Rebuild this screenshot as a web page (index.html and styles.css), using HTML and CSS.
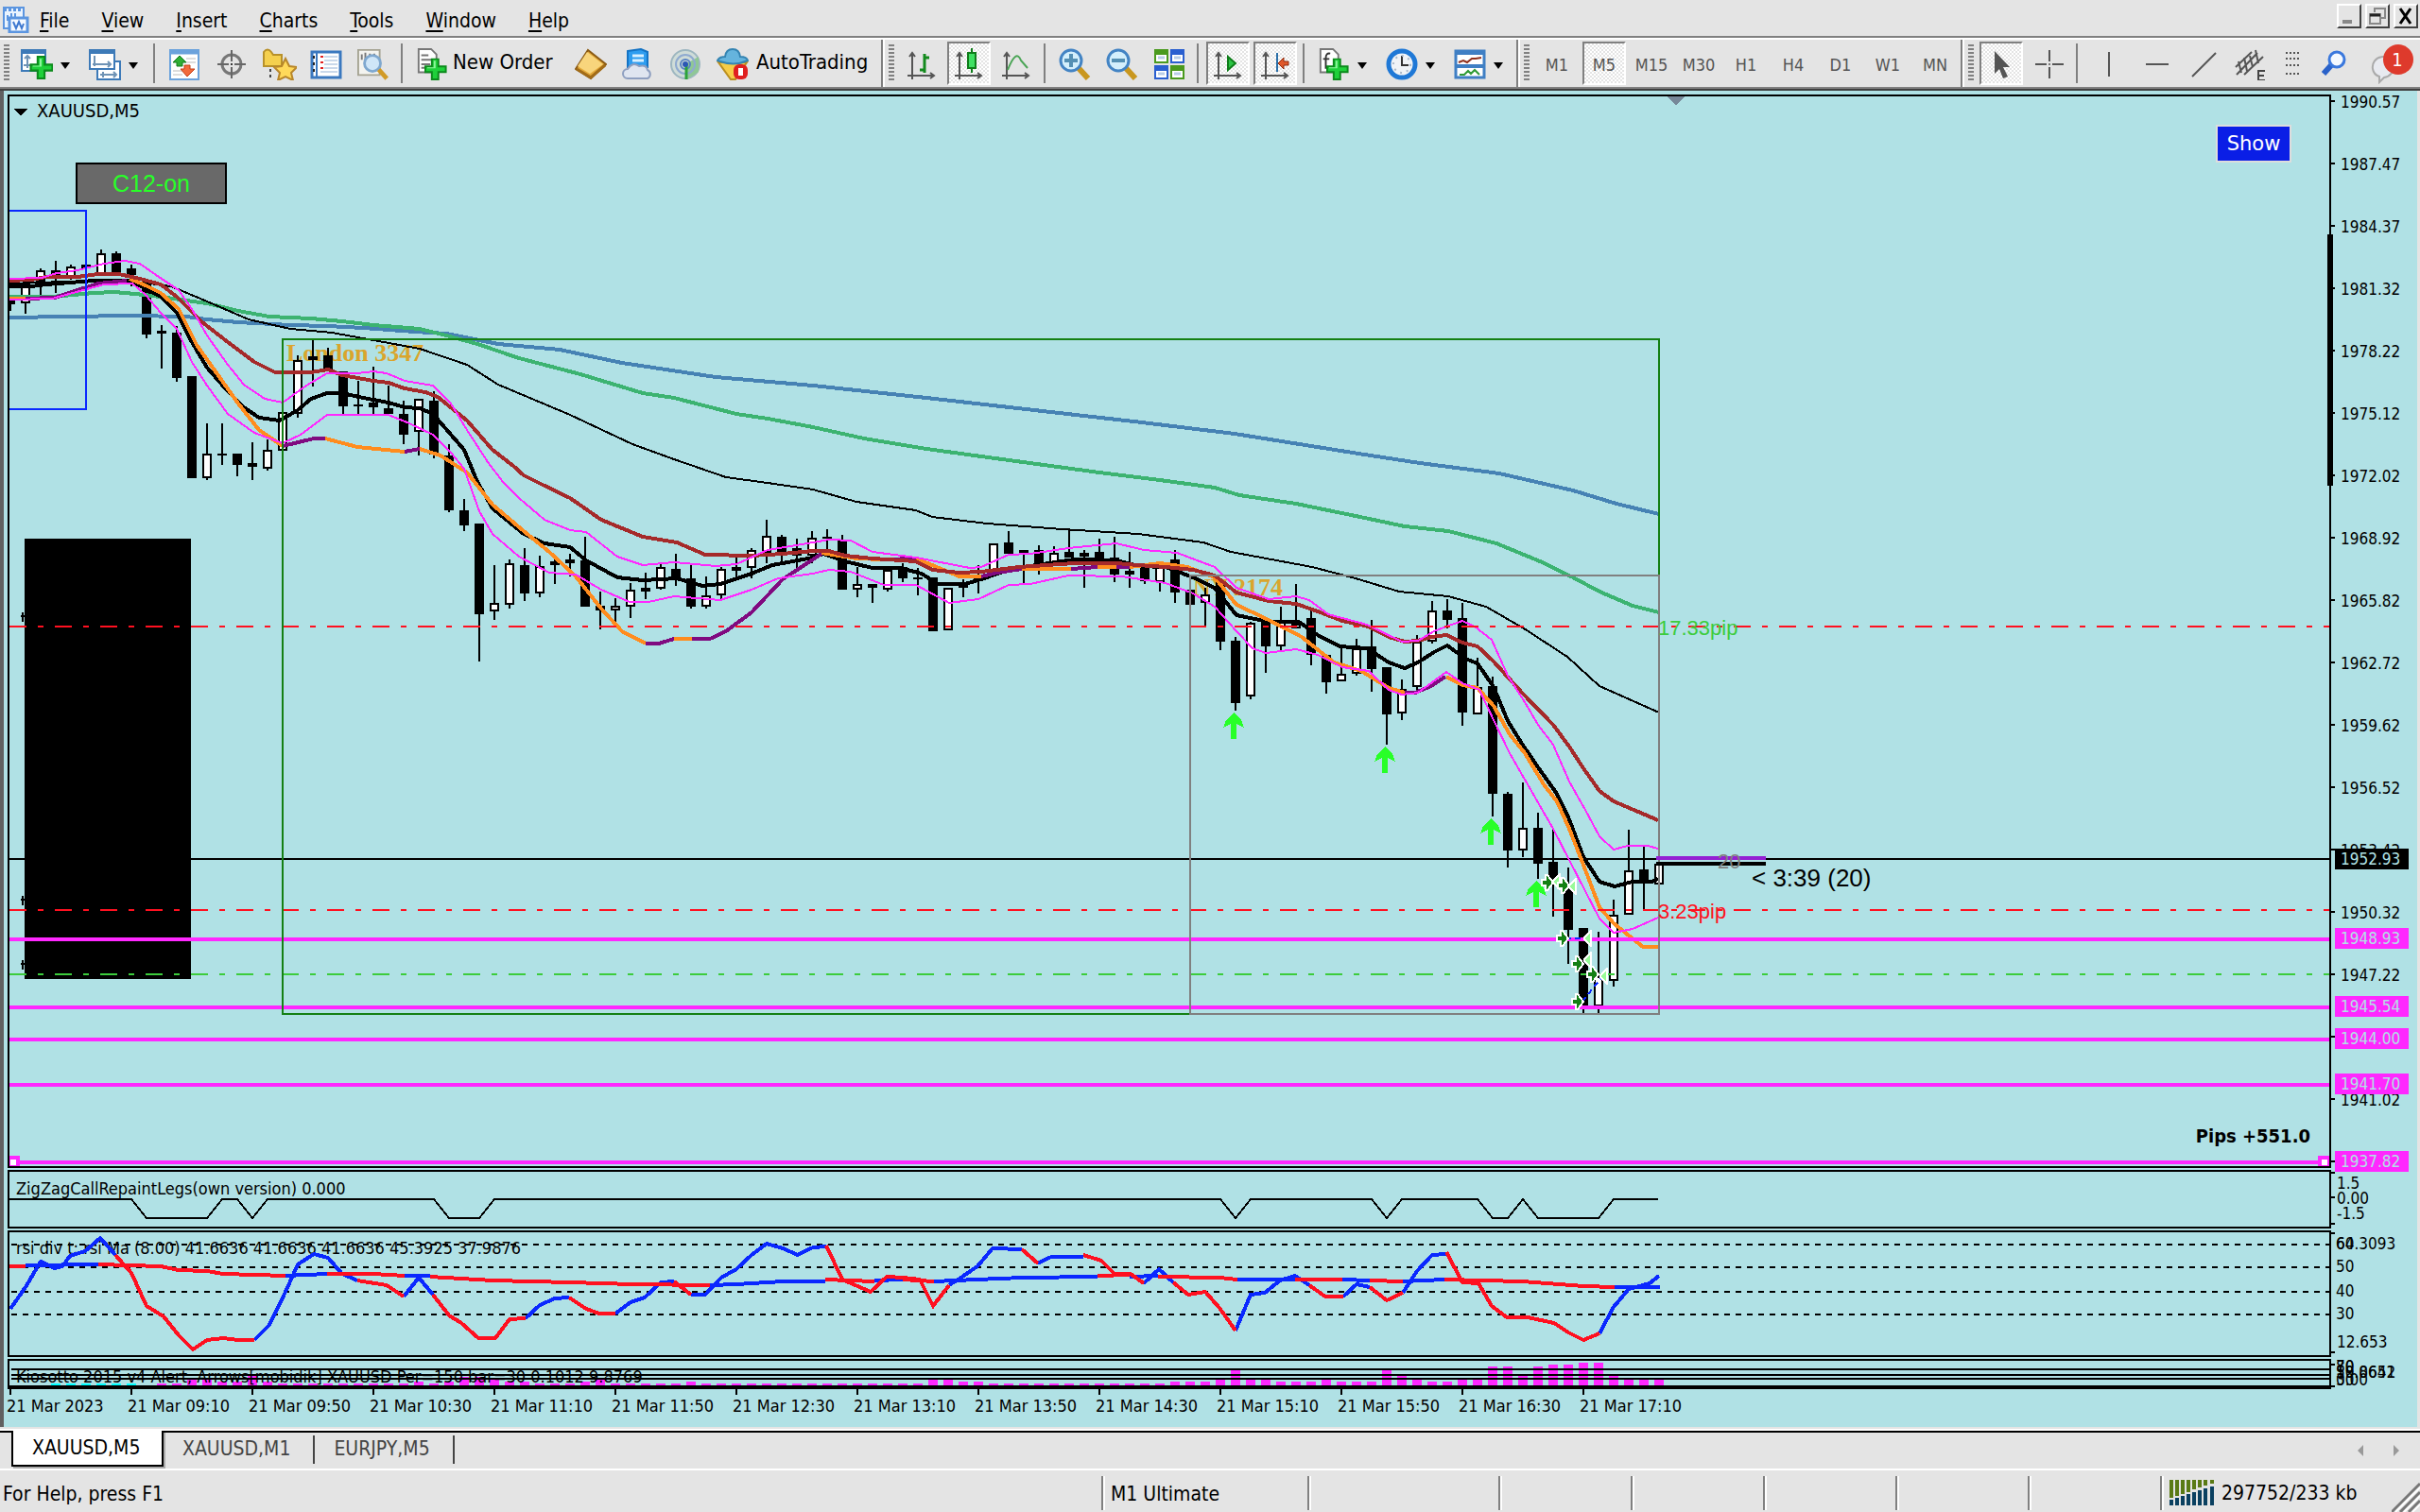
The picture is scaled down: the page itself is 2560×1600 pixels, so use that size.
FILE: index.html
```html
<!DOCTYPE html>
<html lang="en">
<head>
<meta charset="utf-8">
<title>XAUUSD,M5</title>
<link rel="stylesheet" href="styles.css">
</head>
<body>
<svg class="defs" width="0" height="0" aria-hidden="true">
  <defs>
    <symbol id="plus" viewBox="0 0 24 24"><path d="M8 1h7v8h8v6h-8v8H8v-8H1V9h7z" fill="#1fd03a" stroke="#0c8a1c" stroke-width="2"/><path d="M10 3h2v8H3v-1h7z" fill="#8cf59a"/></symbol>
    <symbol id="axes" viewBox="0 0 34 34"><path d="M7 5v28M2 29h28M4 9l3-4 3 4M26 26l4 3-4 3" fill="none" stroke="#555" stroke-width="2"/></symbol>
    <symbol id="trade-in" viewBox="0 0 14 18"><path d="M1 6h4V1h2l6 8-6 8H5v-5H1z" fill="#148014" stroke="#fff" stroke-width="2"/></symbol>
    <symbol id="trade-out" viewBox="0 0 10 18"><path d="M9 1v16L2 10V8z" fill="#98fb98" stroke="#fff" stroke-width="2"/></symbol>
    <symbol id="buy" viewBox="0 0 22 28"><path d="M11 0l8 8 3 8-8-4v16H8V12l-8 4 3-8z" fill="#28ff28"/></symbol>
  </defs>
</svg>

<header class="menubar">
  <svg class="app-icon" width="30" height="30" viewBox="0 0 30 30"><path d="M2 3h21v22H2z" fill="#eaf4ff" stroke="#5b95e0" stroke-width="2"/><path d="M2 5h21" stroke="#5b95e0" stroke-width="4" stroke-dasharray="3 2"/><path d="M6 17v-6m4 4V9m4 4V9" stroke="#5b95e0" stroke-width="2"/><path d="M8 14h19v15H8z" fill="#f4f9ff" stroke="#5b95e0" stroke-width="3"/><path d="M12 18l3 7 3-7 3 7 2-5" fill="none" stroke="#3d78d0" stroke-width="2"/></svg>
  <nav class="menu">
    <button><u>F</u>ile</button><button><u>V</u>iew</button><button><u>I</u>nsert</button><button><u>C</u>harts</button><button><u>T</u>ools</button><button><u>W</u>indow</button><button><u>H</u>elp</button>
  </nav>
  <div class="winbuttons">
    <button aria-label="Minimize"><svg width="22" height="20"><path d="M4 16h10" stroke="#888" stroke-width="4"/></svg></button>
    <button aria-label="Restore"><svg width="22" height="20"><path d="M8 6V2h11v10h-4M3 8h11v10H3z" fill="none" stroke="#888" stroke-width="2"/><path d="M3 9h11" stroke="#222" stroke-width="3"/></svg></button>
    <button aria-label="Close"><svg width="22" height="20"><path d="M5 2l11 16M16 2L5 18" stroke="#000" stroke-width="3"/></svg></button>
  </div>
</header>

<div class="toolbar">
  <i class="grip"></i>
  <button class="tb dd" aria-label="New chart"><svg class="ico" viewBox="0 0 34 34"><path d="M1 2h25v22H1z" fill="#fff" stroke="#3d7ab8" stroke-width="2"/><path d="M1 4h25" stroke="#3d7ab8" stroke-width="4"/><path d="M7 8v13M4 11l3-3 3 3M3 18h13" fill="none" stroke="#6f93b5" stroke-width="2"/><use href="#plus" x="9" y="8" width="26" height="25"/></svg></button>
  <button class="tb dd" aria-label="Profiles"><svg class="ico" viewBox="0 0 34 34"><path d="M9 14h24v19H9z" fill="#fff" stroke="#3d7ab8" stroke-width="2"/><path d="M1 2h26v20H1z" fill="#fff" stroke="#3d7ab8" stroke-width="2"/><path d="M1 4h26" stroke="#3d7ab8" stroke-width="4"/><path d="M6 8v11M4 17h19M20 14l3 3-3 3M12 28h17M15 25v6M26 25l3 3-3 3" fill="none" stroke="#6f93b5" stroke-width="2"/></svg></button>
  <i class="sep"></i>
  <button class="tb" aria-label="Market watch"><svg class="ico" viewBox="0 0 34 34"><path d="M2 2h30v31H2z" fill="#fff" stroke="#6ba2dc" stroke-width="2"/><path d="M2 4h30" stroke="#6ba2dc" stroke-width="5"/><path d="M19 11h10M19 15h10M5 24h10M5 28h10" stroke="#ddd" stroke-width="2"/><path d="M12 8l7 7h-4v4h-6v-4H5z" fill="#2fae35" stroke="#137a1c"/><path d="M17 18h6v4h5l-8 8-7-8h4z" fill="#f26a3c" stroke="#c33c14"/></svg></button>
  <button class="tb" aria-label="Data window"><svg class="ico" viewBox="0 0 34 34"><circle cx="17" cy="17" r="10" fill="none" stroke="#777" stroke-width="3"/><path d="M17 2v12M17 20v12M2 17h12M20 17h12" stroke="#666" stroke-width="2"/><circle cx="17" cy="17" r="1"/></svg></button>
  <button class="tb" aria-label="Navigator"><svg class="ico wide" viewBox="0 0 38 34"><path d="M3 4q4-5 8 0l2 3h9v12H3z" fill="#f5d04e" stroke="#b8912a" stroke-width="2"/><path d="M10 22v12" stroke="#444" stroke-width="2" stroke-dasharray="3 3"/><path d="M26 11l4 8 8 1-6 6 2 8-8-4-8 4 2-8-6-6 8-1z" fill="#ffd95a" stroke="#b8862a" stroke-width="2"/></svg></button>
  <button class="tb" aria-label="Terminal"><svg class="ico" viewBox="0 0 34 34"><path d="M2 4h30v27H2z" fill="#fff" stroke="#3a78bf" stroke-width="3"/><path d="M7 4v27" stroke="#3a78bf" stroke-width="2"/><path d="M11 9h3M11 15h3M11 21h3" stroke="#e02020" stroke-width="2"/><path d="M15 9h14M15 13h14M15 17h14M15 21h14M11 25h18" stroke="#c9d8ea" stroke-width="2"/><path d="M4 8v3m0 4v3m0 4v3" stroke="#222" stroke-width="2"/></svg></button>
  <button class="tb" aria-label="Strategy tester"><svg class="ico" viewBox="0 0 36 36"><path d="M1 2h24v28H1z" fill="#f4f4f0" stroke="#a5a392" stroke-width="2"/><path d="M5 7v6M9 5v8M14 6v6M19 6v6" stroke="#777" stroke-width="2"/><circle cx="17" cy="17" r="9" fill="#cfe6f8" stroke="#7fa8cf" stroke-width="3"/><path d="M24 24l9 10" stroke="#d19a26" stroke-width="5"/></svg></button>
  <i class="sep"></i>
  <button class="tb text order"><svg class="ico" viewBox="0 0 34 36"><path d="M2 1h14l6 6v20H2z" fill="#fff" stroke="#777" stroke-width="2"/><path d="M5 8h8M5 13h12M5 18h10M5 22h8" stroke="#777" stroke-width="2"/><use href="#plus" x="8" y="11" width="26" height="25"/></svg><span>New Order</span></button>
  <button class="tb" aria-label="MetaEditor"><svg class="ico" viewBox="0 0 34 34"><path d="M14 2L33 17 17 32 1 22z" fill="#e3a93a" stroke="#8a5a14" stroke-width="2"/><path d="M13 4L3 19l13 8L30 17z" fill="#f8d57c"/><path d="M2 22l15 9 15-13" fill="none" stroke="#a26c18" stroke-width="3"/></svg></button>
  <button class="tb" aria-label="VPS"><svg class="ico" viewBox="0 0 34 34"><path d="M6 3l14-2 7 3v16H6z" fill="#2e9df0" stroke="#1473c4" stroke-width="2"/><path d="M11 8h12M11 13h12" stroke="#d8f0ff" stroke-width="3"/><path d="M6 32a5 5 0 0 1 0-10q5-8 12-3 8-2 9 4a5 5 0 0 1 0 9z" fill="#dfe5f0" stroke="#8e9fc0" stroke-width="2"/></svg></button>
  <button class="tb" aria-label="Signals"><svg class="ico" viewBox="0 0 34 34"><circle cx="17" cy="17" r="15" fill="#cfdcd8" stroke="#9db6c0" stroke-width="2"/><path d="M17 17L31 9v16L19 33z" fill="#8fc796"/><circle cx="17" cy="17" r="10" fill="none" stroke="#8faad0" stroke-width="2"/><circle cx="17" cy="17" r="5" fill="none" stroke="#5a83c4" stroke-width="2"/><path d="M18 17v16" stroke="#2ba33a" stroke-width="3"/><circle cx="17" cy="17" r="3" fill="#2b57b5"/></svg></button>
  <button class="tb text auto"><svg class="ico" viewBox="0 0 34 34"><path d="M2 15h30L20 33h-5z" fill="#f6cd48" stroke="#bb8f1e" stroke-width="2"/><path d="M1 13q2-4 8-4 1-8 8-8t8 8q7 0 8 4-15 7-32 0z" fill="#65b4dd" stroke="#3484b2" stroke-width="2"/><rect x="18" y="17" width="15" height="16" rx="6" fill="#e02020"/><path d="M23 21h5v8h-5z" fill="#fff"/></svg><span>AutoTrading</span></button>
  <i class="split"></i><i class="grip"></i>
  <button class="tb" aria-label="Bar chart"><svg class="ico" viewBox="0 0 34 34"><use href="#axes"/><path d="M20 6v20M20 10h5M15 23h5" stroke="#138a1d" stroke-width="3"/></svg></button>
  <button class="tb on" aria-label="Candlesticks"><svg class="ico" viewBox="0 0 34 34"><use href="#axes"/><path d="M20 0v26" stroke="#0f7d1a" stroke-width="2"/><path d="M16 5h8v16h-8z" fill="#3fe062" stroke="#0f7d1a" stroke-width="2"/></svg></button>
  <button class="tb" aria-label="Line chart"><svg class="ico" viewBox="0 0 34 34"><use href="#axes"/><path d="M8 23Q17 0 22 13l7 8" fill="none" stroke="#4ba556" stroke-width="2"/></svg></button>
  <i class="sep"></i>
  <button class="tb" aria-label="Zoom in"><svg class="ico" viewBox="0 0 34 34"><path d="M20 20l11 12" stroke="#c9971f" stroke-width="6"/><circle cx="13" cy="13" r="11" fill="#d3effc" stroke="#4384c4" stroke-width="3"/><path d="M13 6v14M6 13h14" stroke="#5490b4" stroke-width="4"/></svg></button>
  <button class="tb" aria-label="Zoom out"><svg class="ico" viewBox="0 0 34 34"><path d="M20 20l11 12" stroke="#c9971f" stroke-width="6"/><circle cx="13" cy="13" r="11" fill="#d3effc" stroke="#4384c4" stroke-width="3"/><path d="M6 13h14" stroke="#5490b4" stroke-width="4"/></svg></button>
  <button class="tb" aria-label="Tile windows"><svg class="ico" viewBox="0 0 34 34"><path d="M1 1h15v15H1zM18 18h15v15H18z" fill="#4a9a1e"/><path d="M18 1h15v15H18zM1 18h15v15H1z" fill="#2a5fd0"/><path d="M3 7h11v7H3zM20 7h11v7H20zM3 24h11v7H3zM20 24h11v7H20z" fill="#fff"/><path d="M5 10h7M22 10h7M5 27h7M22 27h7" stroke="#b9cde8" stroke-width="3"/></svg></button>
  <i class="sep"></i>
  <button class="tb on" aria-label="Auto scroll"><svg class="ico" viewBox="0 0 34 34"><use href="#axes"/><path d="M17 9l8 7-8 7z" fill="#2bc443" stroke="#0f7d1a" stroke-width="2"/></svg></button>
  <button class="tb on" aria-label="Chart shift"><svg class="ico" viewBox="0 0 34 34"><use href="#axes"/><path d="M19 5v20" stroke="#2b6fa8" stroke-width="2"/><path d="M20 16l6-6v4h5v4h-5v4z" fill="#e0582a" stroke="#8f2a0c"/></svg></button>
  <i class="sep"></i>
  <button class="tb dd" aria-label="Indicators"><svg class="ico" viewBox="0 0 34 36"><path d="M2 1h14l6 6v20H2z" fill="#fff" stroke="#777" stroke-width="2"/><path d="M13 6q-5-1-5 5v12M5 12h7" fill="none" stroke="#333" stroke-width="2"/><use href="#plus" x="8" y="11" width="26" height="25"/></svg></button>
  <button class="tb dd" aria-label="Periods"><svg class="ico" viewBox="0 0 34 34"><circle cx="17" cy="17" r="14" fill="#f0f3f7" stroke="#1f78d6" stroke-width="5"/><path d="M17 8v10h7" fill="none" stroke="#333" stroke-width="2"/><circle cx="17" cy="17" r="9" fill="none" stroke="#aab8c8" stroke-width="2" stroke-dasharray="2 5"/></svg></button>
  <button class="tb dd" aria-label="Templates"><svg class="ico" viewBox="0 0 34 34"><path d="M2 3h30v28H2z" fill="#fff" stroke="#3f7fc4" stroke-width="3"/><path d="M2 5h30M2 19h30" stroke="#3f7fc4" stroke-width="4"/><path d="M5 15l5-2 4 2 5-4h4l6-1" fill="none" stroke="#8f2f1c" stroke-width="2"/><path d="M6 28h5l4-4 3 3 4-4 5 5" fill="none" stroke="#2f9a35" stroke-width="2"/></svg></button>
  <i class="split"></i><i class="grip"></i>
  <button class="tb tf">M1</button><button class="tb tf on">M5</button><button class="tb tf">M15</button><button class="tb tf">M30</button><button class="tb tf">H1</button><button class="tb tf">H4</button><button class="tb tf">D1</button><button class="tb tf">W1</button><button class="tb tf">MN</button>
  <i class="split"></i><i class="grip"></i>
  <button class="tb on" aria-label="Cursor"><svg class="ico" viewBox="0 0 34 34"><path d="M10 3l16 17h-7l5 10-5 2-4-10-5 5z" fill="#555"/></svg></button>
  <button class="tb" aria-label="Crosshair"><svg class="ico" viewBox="0 0 34 34"><path d="M18 2v12M18 20v12M3 17h12M21 17h12" stroke="#555" stroke-width="2"/><circle cx="18" cy="17" r="1" fill="#555"/></svg></button>
  <i class="sep"></i>
  <button class="tb" aria-label="Vertical line"><svg class="ico" viewBox="0 0 34 34"><path d="M19 4v26" stroke="#555" stroke-width="2"/></svg></button>
  <button class="tb" aria-label="Horizontal line"><svg class="ico" viewBox="0 0 34 34"><path d="M8 17h24" stroke="#555" stroke-width="2"/></svg></button>
  <button class="tb" aria-label="Trend line"><svg class="ico" viewBox="0 0 34 34"><path d="M7 30L32 5" stroke="#555" stroke-width="2"/></svg></button>
  <button class="tb" aria-label="Equidistant channel"><svg class="ico" viewBox="0 0 34 34"><path d="M3 20L20 4M4 28L26 5M12 28L32 9M6 14l3 12M12 10l3 14M18 8l3 12M24 2l3 14" stroke="#555" stroke-width="2"/><path d="M34 24h-7v10h7M27 29h6" fill="none" stroke="#444" stroke-width="2"/></svg></button>
  <button class="tb" aria-label="Fibonacci"><svg class="ico" viewBox="0 0 34 34"><path d="M6 5h16M6 11h16M6 18h16M6 27h16" stroke="#555" stroke-width="2" stroke-dasharray="2 2"/></svg></button>
  <span class="right">
    <button class="tb search" aria-label="Search"><svg class="ico" viewBox="0 0 34 34"><path d="M11 17L2 27" stroke="#2a62c9" stroke-width="6"/><circle cx="16" cy="12" r="8" fill="#f4f9ff" stroke="#3a78dd" stroke-width="3"/></svg></button>
    <button class="tb chat" aria-label="Notifications"><svg width="48" height="44" viewBox="0 0 48 44"><path d="M4 28a11 11 0 1 1 12 9l-5 5v-6q-6-2-7-8z" fill="#e8eaf0" stroke="#aaa" stroke-width="2"/><circle cx="31" cy="18" r="16" fill="#de3a2c"/><text x="30" y="25" text-anchor="middle" class="badge">1</text></svg></button>
  </span>
</div>

<main class="chart">
  <section class="pane price">
    <div class="plot">
      <svg class="canvas">
        <g transform="translate(-10,-102)" class="crisp">
          <path d="M15 115h14l-7 8z"/>
          <text x="39" y="124" class="symbol">XAUUSD,M5</text>
          <path d="M1764 102h18l-9 10z" fill="#778899"/>
          <g class="session"><text x="303" y="382">London 3347</text><text x="1262" y="630">NY 2174</text></g>
          <path d="M10 909H6000" class="k2"/>
          <g id="candles"></g>
          <g fill="none" stroke-width="4" stroke-linejoin="round">
            <polyline stroke="#4682b4" points="10,336 72,335 137,334 197,335 219,338 252,341 307,344 346,345 384,347 439,351 472,353 527,364 592,370 658,384 757,399 860,408 980,421 1094,434 1208,447 1306,459 1437,480 1502,490 1586,501 1664,519 1710,533 1755,544"/>
            <polyline stroke="#3cb371" points="10,314 55,314 99,310 121,309 143,311 170,314 197,318 219,321 252,329 285,335 329,337 362,340 395,344 444,348 472,355 505,364 549,379 614,396 680,416 713,421 779,438 812,443 860,452 914,464 980,475 1060,486 1163,500 1227,508 1285,516 1311,524 1371,533 1434,546 1486,557 1532,562 1583,575 1629,594 1664,611 1692,626 1727,641 1755,648"/>
            <polyline class="k2" points="10,300 99,297 143,298 181,303 219,319 263,338 307,348 351,352 395,360 444,369 494,386 527,407 603,439 669,470 713,486 768,505 812,511 860,518 906,531 969,540 986,547 1044,554 1124,560 1204,565 1273,574 1302,584 1388,600 1434,612 1480,626 1532,631 1572,642 1612,665 1658,695 1692,726 1755,754"/>
            <polyline stroke="#000" points="10,303 33,303 49,301 99,297 137,297 154,305 170,314 187,331 203,362 219,389 241,414 258,431 274,442 296,445 315,434 329,422 346,416 362,416 384,421 411,426 428,431 444,432 458,438 491,476 505,510 521,538 554,565 576,575 603,579 620,593 653,611 680,614 716,612 743,620 762,618 795,607 817,598 860,590 871,586 894,594 923,601 952,601 975,607 992,618 1021,618 1041,612 1061,605 1090,599 1136,592 1181,593 1204,599 1233,600 1262,611 1285,622 1308,651 1342,658 1374,658 1394,672 1417,684 1446,686 1469,701 1486,707 1500,701 1517,690 1531,683 1550,697 1563,702 1580,727 1595,763 1610,787 1627,812 1647,840 1660,867 1675,907 1692,933 1708,938 1727,933 1747,933 1754,930"/>
            <g stroke="#ff8c1e">
              <polyline points="10,316 27,316"/>
              <polyline points="137,295 154,302 170,310 189,327 208,365 230,396 252,427 274,455 299,472"/>
              <polyline points="344,464 378,473 428,478"/>
              <polyline points="444,475 466,482 494,500 521,534 554,562 581,584 609,610 636,644 658,668 683,681"/>
              <polyline points="713,676 732,676"/>
              <polyline points="869,585 906,591 935,592"/>
              <polyline points="969,591 998,603 1015,610 1038,610"/>
              <polyline points="1081,602 1133,602"/>
              <polyline points="1161,600 1181,600"/>
              <polyline points="1195,600 1227,596 1256,600 1285,611 1308,640 1342,656 1377,674 1411,701 1440,710 1469,728 1486,733"/>
              <polyline points="1530,716 1547,725 1563,728 1580,747 1597,777 1613,797 1633,830 1647,848 1660,877 1673,910 1692,960 1707,977 1723,990 1738,1002 1755,1002"/>
            </g>
            <g stroke="#800a80">
              <polyline points="27,316 58,315 82,307 104,300 134,297"/>
              <polyline points="299,472 332,464 344,464"/>
              <polyline points="428,478 444,475"/>
              <polyline points="683,681 697,681 713,676"/>
              <polyline points="732,676 751,676 768,668 795,648 828,613 860,592 869,586"/>
              <polyline points="935,592 969,591"/>
              <polyline points="1038,610 1055,606 1081,602"/>
              <polyline points="1133,602 1161,600"/>
              <polyline points="1181,600 1195,600"/>
              <polyline points="1486,733 1497,733 1514,726 1529,716"/>
            </g>
            <polyline stroke="#a52a2a" points="10,297 33,296 49,293 82,293 104,290 126,290 148,295 170,301 187,314 214,341 241,362 269,383 291,394 329,394 347,391 362,397 395,403 411,405 428,411 450,415 463,420 494,445 521,476 543,493 554,503 576,514 603,527 636,550 680,568 716,574 746,587 795,588 828,586 860,583 877,583 894,588 923,591 969,594 986,603 1015,606 1038,605 1078,600 1136,596 1181,596 1204,598 1233,600 1262,603 1285,609 1308,627 1342,636 1371,639 1394,647 1420,657 1448,663 1469,674 1486,679 1500,678 1514,674 1530,672 1547,680 1563,684 1580,700 1610,733 1643,767 1660,790 1675,813 1692,837 1707,848 1733,859 1754,868"/>
            <g stroke="#ff28ff" stroke-width="2">
              <polyline points="10,295 44,294 60,289 82,286 110,279 132,276 148,279 165,291 189,307 203,327 219,355 241,386 258,407 280,422 299,426 324,408 346,395 378,395 395,393 409,395 428,403 458,408 477,427 494,455 516,489 532,510 549,527 576,550 603,561 620,563 653,589 680,598 713,595 757,599 779,597 812,582 860,574 877,571 900,572 923,584 969,590 1026,601 1038,600 1067,587 1090,586 1130,580 1181,575 1210,582 1245,585 1285,600 1308,622 1342,634 1371,631 1385,635 1405,650 1446,661 1483,679 1500,678 1517,668 1530,663 1547,657 1560,663 1578,677 1595,715 1613,743 1627,767 1643,788 1660,827 1677,857 1692,885 1707,899 1722,895 1743,895 1754,898"/>
              <polyline points="10,317 55,316 88,307 110,301 140,300 154,312 170,331 187,348 203,383 219,408 241,438 269,458 299,469 318,460 346,439 411,439 433,448 458,460 477,479 491,496 507,541 521,565 549,589 581,606 609,608 636,624 666,637 686,637 713,631 762,635 795,624 823,612 860,607 877,603 900,605 935,619 969,619 1004,638 1035,634 1067,619 1090,618 1130,609 1187,610 1233,617 1262,628 1285,642 1308,668 1325,686 1339,691 1371,687 1394,693 1420,706 1448,710 1469,730 1483,735 1500,733 1530,711 1547,723 1565,730 1580,762 1597,797 1620,837 1643,877 1660,910 1677,943 1692,972 1707,987 1727,983 1754,971"/>
            </g>
          </g>
          <path d="M22 652h6m-4-4v10M22 952h6m-4-4v10M22 1020h6m-4-4v10" class="k2"/>
          <path d="M26 570h176v466H26z"/>
          <g fill="none" stroke-width="2" stroke-dasharray="18 12 6 12">
            <path d="M10 663H6000M10 963H6000" stroke="#ff1020"/>
            <path d="M10 1031H6000" stroke="#3ccc3c"/>
          </g>
          <path d="M10 994H6000M10 1066H6000M10 1100H6000M10 1148H6000M10 1230H6000" stroke="#ff28ff" stroke-width="4"/>
          <g fill="none" stroke-width="2">
            <path d="M8 223h83v210H8" stroke="#0a28ff"/>
            <path d="M299 359h1456v714H299z" stroke="#148014"/>
            <path d="M1259 609h496v464h-496z" stroke="#808080"/>
          </g>
          <path d="M1752 908h116" stroke="#9420d3" stroke-width="4"/>
          <path d="M1752 914h116" stroke="#000" stroke-width="4"/>
          <use href="#buy" x="1294" y="754" width="22" height="28"/><use href="#buy" x="1454" y="790" width="22" height="28"/><use href="#buy" x="1566" y="866" width="22" height="28"/><use href="#buy" x="1614" y="932" width="22" height="28"/>
          <path d="M1656 993h24M1674 1060l14-18 8-9" stroke="#0a28ff" stroke-width="2" fill="none" stroke-dasharray="6 4"/>
          <g id="trades"></g>
          <g class="note">
            <text x="1754" y="672" fill="#3ccc3c">17.33pip</text><text x="1754" y="972" fill="#ff1020">3.23pip</text><text x="1817" y="919" fill="#808080">20</text>
            <text x="1853" y="938" class="timer">&lt; 3:39 (20)</text>
          </g>
          <path d="M9 1225h10v10H9z" fill="#fff" stroke="#ff28ff" stroke-width="4"/>
        </g>
        <svg x="100%" y="1122" overflow="visible"><path d="M-10 1h10v10h-10z" fill="#fff" stroke="#ff28ff" stroke-width="4"/></svg>
      </svg>
      <button class="c12">C12-on</button>
      <button class="show">Show</button>
      <strong class="pips">Pips +551.0</strong>
    </div>
    <svg class="axis" id="price-axis"></svg>
  </section>

  <section class="pane zigzag">
    <div class="plot"><svg class="canvas"><g transform="translate(-10,-1240)" class="crisp">
      <polyline class="k2" fill="none" points="10,1269 139,1269 155,1289 219,1289 235,1269 251,1269 267,1289 283,1269 459,1269 475,1289 507,1289 523,1269 1291,1269 1307,1289 1323,1269 1451,1269 1467,1289 1483,1269 1563,1269 1579,1289 1595,1289 1611,1269 1627,1289 1691,1289 1707,1269 1754,1269"/>
      <text x="17" y="1264">ZigZagCallRepaintLegs(own version) 0.000</text></g></svg></div>
    <svg class="axis"><path d="M0 3h4M0 29h4M0 57h4" class="k2"/><text x="6" y="20">1.5</text><text x="6" y="36">0.00</text><text x="6" y="52">-1.5</text></svg>
  </section>

  <section class="pane rsi">
    <div class="plot"><svg class="canvas"><g transform="translate(-10,-1304)" class="crisp" fill="none">
      <path d="M12 1317H6000M12 1341H6000M12 1367H6000M12 1391H6000" class="k2" stroke-dasharray="6 6"/>
      <text x="17" y="1327" fill="#000">rsi div t: rsi Ma (8.00) 41.6636 41.6636 41.6636 45.3925 37.9876</text>
      <g stroke="#0a28ff" stroke-width="4">
        <path d="M27 1339L104 1338M302 1350L346 1348M428 1350L455 1350M751 1360L779 1359 828 1356 873 1356M925 1355L955 1354M988 1356L1033 1354 1082 1352 1161 1351M1195 1351L1225 1350M1309 1354H1370M1420 1354L1449 1355M1484 1356L1528 1354M1708 1362H1756"/>
        <path d="M11 1385L27 1362 43 1335 58 1342 66 1340 74 1329 90 1324 106 1310 122 1328M269 1418L285 1402 302 1367 315 1338 332 1327 347 1331 362 1348 378 1355M427 1372L443 1352 458 1370M556 1395L571 1381 587 1374 602 1373M651 1390L667 1378 682 1373 699 1357 713 1356M731 1370L746 1370 763 1352 779 1343 795 1328 811 1316 828 1321 844 1328 860 1320 874 1319M1004 1360L1015 1353 1034 1340 1050 1321 1081 1322M1098 1337L1112 1330 1146 1330M1210 1358L1226 1343 1241 1357M1307 1408L1323 1370 1338 1368 1354 1355 1370 1350 1385 1360M1421 1372L1435 1359 1449 1362M1484 1368L1499 1345 1515 1328 1530 1327M1692 1411L1707 1383 1723 1364 1745 1358 1755 1350"/>
      </g>
      <g stroke="#ff1020" stroke-width="4">
        <path d="M10 1340H27M104 1338L170 1340 189 1344 219 1345 236 1348 302 1350M346 1348L395 1348 428 1350M455 1351L488 1353 521 1355 603 1357 669 1359 751 1360M873 1354L925 1356M955 1354L988 1356M1161 1350L1195 1349M1225 1351L1290 1352 1309 1354M1370 1354H1420M1449 1355L1484 1356M1528 1354L1610 1356 1675 1361 1708 1362"/>
        <path d="M122 1328L139 1347 155 1382 173 1393 189 1413 204 1428 219 1418 236 1416 252 1418 269 1418M378 1355L409 1360 427 1372M458 1370L475 1392 488 1400 506 1416 524 1416 539 1396 556 1395M602 1373L620 1385 634 1390 651 1390M713 1356L731 1370M874 1318L891 1354 921 1367 938 1351 955 1352 973 1354 987 1382 1004 1360M1081 1322L1098 1337M1146 1328L1165 1334 1179 1348 1196 1348 1210 1358M1241 1357L1257 1370 1275 1367 1290 1384 1307 1408M1385 1360L1402 1372 1421 1372M1449 1362L1467 1376 1484 1368M1530 1325L1547 1357 1564 1358 1578 1382 1594 1394 1616 1394 1644 1400 1659 1410 1675 1418 1692 1411"/>
      </g></g></svg></div>
    <svg class="axis"><path d="M0 3h4M0 129h4" class="k2"/><text x="5" y="20">64.3093</text><text x="5" y="20">60</text><text x="5" y="44">50</text><text x="5" y="70">40</text><text x="5" y="94">30</text><text x="6" y="124">12.653</text></svg>
  </section>

  <section class="pane kios">
    <div class="plot"><svg class="canvas"><g transform="translate(-10,-1440)" class="crisp">
      <g id="hist"></g>
      <path d="M12 1449H6000M12 1455H6000M12 1459H6000" class="k2"/>
      <text x="17" y="1463">Kiosotto 2015 v4 Alert, Arrows[mobidik] XAUUSD Per=150 bar=30 0.1012 9.8769</text></g></svg></div>
    <svg class="axis"><path d="M0 6h4M0 29h4" class="k2"/><text x="5" y="14">70</text><text x="5" y="14">80</text><text x="5" y="20">19.8652</text><text x="5" y="20">50.0641</text><text x="5" y="28">0.00</text><text x="5" y="28">30</text></svg>
  </section>
  <svg class="dates" id="dates"></svg>
</main>

<nav class="tabs">
  <a href="#" class="active">XAUUSD,M5</a><a href="#">XAUUSD,M1</a><a href="#">EURJPY,M5</a>
  <span class="scroll"><button aria-label="Scroll left"><svg width="10" height="12"><path d="M8 0v12L2 6z" fill="#999"/></svg></button><button aria-label="Scroll right"><svg width="10" height="12"><path d="M2 0v12l6-6z" fill="#999"/></svg></button></span>
</nav>

<footer class="status">
  <span class="grow">For Help, press F1</span>
  <span class="c1">M1 Ultimate</span><span class="c2"></span><span class="c3"></span><span class="c3"></span><span class="c3"></span><span class="c3"></span><span class="c3"></span>
  <span class="traffic"><svg width="48" height="28" viewBox="0 0 48 28"><path d="M2 0v19M8 0v17M14 0v15M20 0v13M26 0v10M32 0v8M38 0v6M45 0v4" stroke="#5a7a14" stroke-width="4"/><path d="M2 27v-6M8 27v-8M14 27V17M20 27V15M26 27V13M32 27V11M38 27V9M45 27V7" stroke="#0a4060" stroke-width="4"/></svg>297752/233 kb</span>
  <svg class="resize" width="30" height="32"><path d="M0 32L30 2M9 32L30 11M18 32L30 20" stroke="#777" stroke-width="3"/><path d="M4 32L30 6M13 32L30 15M22 32L30 24" stroke="#fff" stroke-width="2"/></svg>
</footer>
<script src="chart.js"></script>
</body>
</html>
```
FILE: styles.css
```css
* { box-sizing: border-box; }
body {
  margin: 0;
  min-height: 100vh;
  display: flex;
  flex-direction: column;
  background: #e4e4e4;
  color: #000;
  font: 21px/24px "DejaVu Sans Condensed", "DejaVu Sans", sans-serif;
}
button { font: inherit; color: inherit; background: none; border: 0; padding: 0; margin: 0; }
.defs { position: absolute; }

.menubar { display: flex; align-items: center; height: 42px; padding: 0 2px; border-bottom: 2px solid #fff; box-shadow: inset 0 -2px #808080; }
.app-icon { margin-right: 10px; }
.menu { display: flex; gap: 34px; padding-top: 4px; }
.menu u { text-decoration-thickness: 2px; text-underline-offset: 3px; }
.winbuttons { margin-left: auto; display: flex; gap: 4px; margin-bottom: 6px; }
.winbuttons button { width: 26px; height: 26px; border: 2px solid; border-color: #fff #404040 #404040 #fff; }
.winbuttons svg { display: block; }

.toolbar { display: flex; align-items: center; height: 54px; padding: 2px 0 4px; border-bottom: 2px solid #404040; box-shadow: inset 0 -2px #808080; }
.toolbar i { flex: none; }
.grip { width: 6px; height: 40px; margin: 0 6px 0 4px; background: repeating-linear-gradient(#808080 0 2px, transparent 2px 4px); }
.sep { width: 2px; height: 42px; margin: 0 8px 0 2px; background: #808080; }
.split { width: 4px; height: 50px; background: linear-gradient(90deg, #808080 50%, #fff 50%); }
.tb { width: 46px; height: 46px; margin-right: 4px; display: flex; align-items: center; justify-content: center; flex: none; }
.tb.on { border: 2px solid; border-color: #808080 #fff #fff #808080; background: repeating-conic-gradient(#fff 0 25%, #e4e4e4 0 50%) 0 0 / 4px 4px; }
.ico { width: 34px; height: 34px; flex: none; margin-top: 2px; }
.ico.wide { width: 38px; }
.dd { width: 72px; margin-right: 0; justify-content: flex-start; padding-left: 6px; }
.dd::after { content: ""; margin-left: 8px; margin-top: 4px; border: 5px solid transparent; border-top: 7px solid #000; border-bottom: 0; }
.text { justify-content: flex-start; padding-left: 6px; gap: 5px; font-size: 22px; }
.text span { padding-bottom: 3px; white-space: nowrap; }
.order { width: 164px; }
.auto { width: 176px; gap: 8px; }
.tf { font-size: 18px; color: #555; padding-top: 4px; }
.tf.on { padding-top: 4px; }
.right { margin-left: auto; display: flex; padding-right: 8px; }
.tb.search { width: 34px; margin-right: 16px; }
.tb.chat { width: 48px; margin-right: 0; }
.badge { font-size: 20px; fill: #fff; }

.chart { flex: 1; display: flex; flex-direction: column; gap: 2px; margin-right: 3px; padding: 4px 0 0 4px; background: #b0e1e5; border-left: 4px solid #606060; font-size: 18px; }
.pane { display: grid; grid-template: minmax(0, 1fr) / 1fr 91px; flex: none; }
.plot { position: relative; border: 2px solid #000; overflow: hidden; min-height: 0; }
.canvas { display: block; width: 100%; height: 100%; }
.axis { display: block; width: 91px; height: 100%; min-height: 0; overflow: visible; }
.pane.price { flex: 1 0 1136px; }
.zigzag { height: 62px; }
.rsi { height: 134px; }
.kios { height: 32px; }
.kios .plot { border-bottom-width: 4px; }
.crisp { shape-rendering: crispEdges; }
.k2 { stroke: #000; stroke-width: 2px; }
.symbol { font-size: 20px; }
.session { font: bold 26px "Liberation Serif", serif; fill: #daa52c; }
.note { font: 22px "Liberation Sans", sans-serif; }
.timer { font-size: 26px; }
.axis text { font-size: 17px; }
.axis .tag { fill: #b0e1e5; }
.c12 { position: absolute; left: 70px; top: 70px; width: 160px; height: 44px; background: #696969; border: 2px solid #000; color: #28ff28; font: 25px "Liberation Sans", sans-serif; }
.show { position: absolute; right: 40px; top: 30px; width: 80px; height: 40px; background: #0a1ee6; border: 2px solid #ddd; color: #fff; font: 21px "DejaVu Sans", sans-serif; }
.pips { position: absolute; right: 20px; bottom: 20px; font-size: 20px; }
.dates { display: block; flex: none; width: 100%; height: 40px; margin-top: -2px; overflow: visible; }

.tabs { display: flex; height: 44px; margin-top: 2px; padding-left: 12px; border-top: 2px solid #fff; border-bottom: 2px solid #fff; box-shadow: inset 0 2px #000; }
.tabs a { height: 30px; line-height: 28px; margin-top: 5px; padding: 0 24px 0 20px; color: #444; text-decoration: none; border-right: 2px solid #444; }
.tabs a.active { margin: 0; width: 161px; height: 38px; line-height: 37px; padding: 0 0 0 20px; color: #000; background: #fff; border: 2px solid #000; border-top: 0; box-shadow: 2px 2px #aaa; }
.scroll { margin-left: auto; display: flex; align-items: center; gap: 28px; padding-right: 20px; }

.status { display: flex; align-items: center; height: 44px; padding: 4px 0 0 3px; }
.status span { height: 36px; line-height: 38px; border-left: 2px solid #808080; box-shadow: inset 2px 0 #fff; padding-left: 8px; white-space: nowrap; }
.status .grow { flex: 1; border: 0; box-shadow: none; padding: 0; }
.c1 { width: 218px; }
.c2 { width: 202px; }
.c3 { width: 140px; }
.traffic { width: 245px; display: flex; align-items: center; gap: 7px; }
.resize { align-self: flex-end; }
```
FILE: chart.js
```js
const NS = 'http://www.w3.org/2000/svg';
function add(parent, tag, attrs, text) {
  const el = document.createElementNS(NS, tag);
  for (const k in attrs) el.setAttribute(k, attrs[k]);
  if (text) el.textContent = text;
  parent.appendChild(el);
  return el;
}
const FIRST = 11, STEP = 16;

// high, body top, body bottom, low; the letter tells a falling (b) from a rising (w) candle
const candles = `316 317 322 329 b,300 300 321 332 w,284 286 298 312 w,276 286 292 310 b,280 282 293 296 w,279 280 284 290 b,264 268 290 290 w,266 268 290 290 b,280 284 291 303 b,298 298 354 358 b,
344 350 353 390 b,345 352 400 404 b,398 398 506 506 b,448 480 506 508 w,448 480 482 492 b,480 480 492 504 b,468 490 494 508 b,465 476 496 498 w,436 436 477 477 w,376 381 438 442 w,
359 377 381 409 w,368 376 393 393 b,393 393 430 438 b,403 428 430 438 b,388 426 431 439 b,408 432 438 438 b,424 438 460 470 b,422 422 457 482 w,414 424 481 485 b,470 482 540 542 b,
528 540 556 562 b,554 554 650 700 b,598 638 647 656 w,592 596 640 644 w,580 598 628 636 b,588 599 628 632 w,589 594 598 618 b,586 592 596 610 b,568 593 642 642 b,626 641 646 666 b,
633 641 646 658 w,617 624 642 654 w,606 622 626 634 b,595 600 623 624 w,586 602 614 620 b,598 612 642 644 b,610 630 642 644 w,600 602 630 634 w,590 600 604 611 b,580 582 601 612 w,
550 567 585 596 w,566 568 588 596 b,570 580 588 601 b,562 569 588 596 w,560 568 570 582 b,566 572 624 624 b,600 618 624 632 w,618 618 622 638 b,599 603 624 626 w,596 600 612 616 b,
601 611 613 630 b,611 611 668 668 b,622 622 667 667 w,613 618 622 632 w,598 611 615 628 b,575 575 609 609 w,562 574 586 586 b,582 582 586 618 b,577 582 596 608 b,578 585 596 596 w,
561 584 590 590 b,582 585 589 622 w,570 584 592 592 b,568 590 608 616 b,584 604 607 622 w,600 600 615 618 b,594 596 616 626 w,582 592 627 638 b,624 624 640 640 b,622 629 638 664 w,
615 615 679 688 b,674 678 744 752 b,658 659 737 740 w,657 657 684 712 b,642 658 684 690 w,618 660 665 665 w,645 654 693 704 b,693 693 722 734 b,684 713 721 721 w,676 686 713 715 w,
656 684 708 732 b,706 706 756 788 b,719 729 755 762 w,672 679 727 730 w,636 646 679 681 w,634 646 656 665 b,638 654 754 768 b,696 727 756 756 w,716 726 840 864 b,838 840 900 918 b,
828 876 900 907 w,860 876 914 930 b,876 912 935 970 b,918 940 984 1020 b,982 982 1065 1072 b,986 1033 1065 1072 w,952 968 1038 1044 w,878 921 968 968 w,896 920 935 962 b,914 914 936 936 w`;
const box = document.getElementById('candles');
candles.split(',').forEach((row, i) => {
  const [h, t, b, l, kind] = row.trim().split(' ');
  const x = FIRST + STEP * i;
  add(box, 'path', { d: `M${x} ${h}V${l}`, class: 'k2' });
  if (kind === 'w') add(box, 'rect', { x: x - 4, y: +t + 1, width: 8, height: Math.max(2, b - t - 2), fill: '#fff', class: 'k2' });
  else add(box, 'rect', { x: x - 5, y: t, width: 10, height: b - t });
});

const trades = document.getElementById('trades');
[[1646, 933], [1663, 938], [1679, 993], [1679, 1016], [1696, 1033]].forEach(([x, y]) =>
  add(trades, 'use', { href: '#trade-out', x: x - 5, y: y - 9, width: 10, height: 18 }));
[[1637, 934], [1654, 937], [1653, 993], [1669, 1020], [1685, 1031], [1669, 1060]].forEach(([x, y]) =>
  add(trades, 'use', { href: '#trade-in', x: x - 7, y: y - 9, width: 14, height: 18 }));

// histogram heights that differ from the 2px base
const tall = { 12: 6, 13: 6, 14: 4, 15: 4, 16: 10, 17: 4, 27: 4, 29: 4, 30: 9, 31: 9, 32: 6, 33: 4, 34: 4, 38: 4, 39: 6, 45: 4, 61: 6, 62: 6, 63: 4, 64: 4,
  77: 4, 78: 4, 79: 4, 80: 6, 81: 16, 82: 6, 83: 6, 84: 4, 85: 4, 86: 4, 87: 6, 88: 4, 89: 4, 90: 4, 91: 16, 92: 10, 93: 6, 94: 4, 95: 4, 96: 6,
  97: 6, 98: 20, 99: 20, 100: 10, 101: 20, 102: 22, 103: 22, 104: 24, 105: 24, 106: 10, 107: 6, 108: 6, 109: 6 };
const hist = document.getElementById('hist');
for (let i = 3; i < 110; i++) {
  if (i === 9) continue;
  const h = tall[i] || 2;
  add(hist, 'rect', { x: FIRST + STEP * i - 5, y: 1466 - h, width: 10, height: h, fill: i < 9 ? '#00ffff' : '#ff28ff' });
}

const axis = document.getElementById('price-axis');
add(axis, 'path', { d: 'M-1 148V414', stroke: '#000', 'stroke-width': 6 });
['1990.57', '1987.47', '1984.37', '1981.32', '1978.22', '1975.12', '1972.02', '1968.92', '1965.82', '1962.72', '1959.62', '1956.52', '1953.42', '1950.32', '1947.22', '1944.12', '1941.02', '1937.92'].forEach((p, i) => {
  const y = 7 + 66 * i;
  add(axis, 'path', { d: `M0 ${y}h4`, class: 'k2' });
  if (p !== '1944.12' && p !== '1937.92') add(axis, 'text', { x: 10, y: y + 7 }, p);
});
[['1952.93', 798, '#000'], ['1948.93', 882], ['1945.54', 954], ['1944.00', 988], ['1941.70', 1036], ['1937.82', 1118]].forEach(([p, y, fill]) => {
  add(axis, 'rect', { x: 4, y, width: 78, height: 22, fill: fill || '#ff28ff' });
  add(axis, 'text', { x: 10, y: y + 17, class: 'tag' }, p);
});

const dates = document.getElementById('dates');
['2023', '09:10', '09:50', '10:30', '11:10', '11:50', '12:30', '13:10', '13:50', '14:30', '15:10', '15:50', '16:30', '17:10'].forEach((t, i) => {
  const x = 3 + 128 * i;
  add(dates, 'path', { d: `M${x} 0v6`, class: 'k2' });
  add(dates, 'text', { x: x - 4, y: 24 }, '21 Mar ' + t);
});
```
